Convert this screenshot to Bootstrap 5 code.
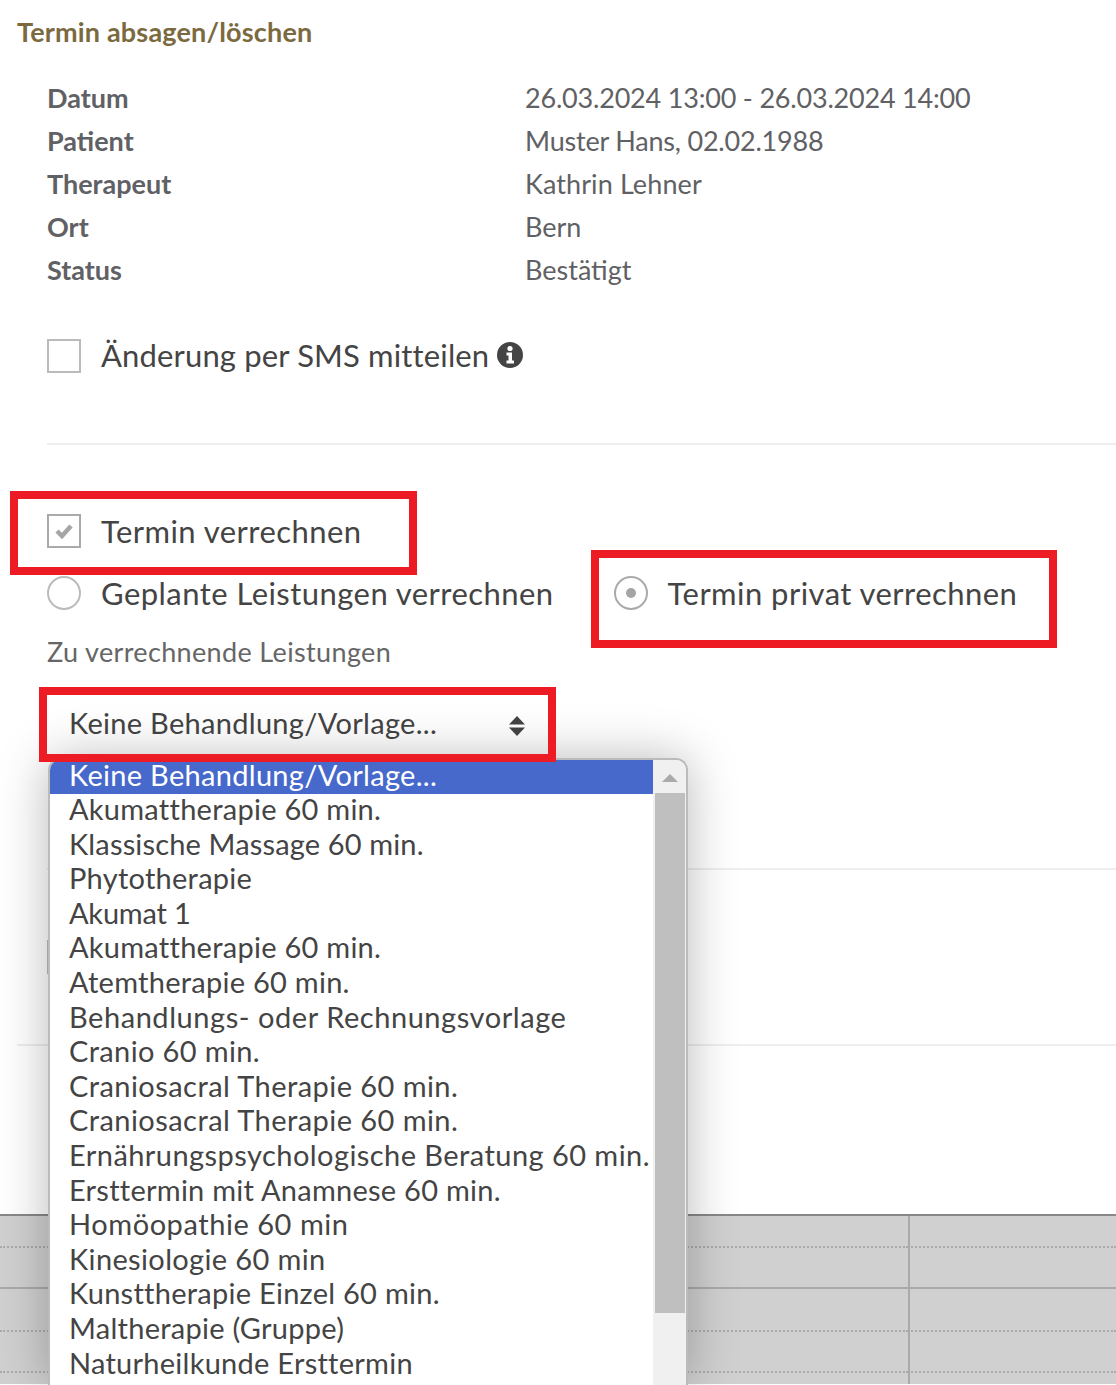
<!DOCTYPE html>
<html lang="de">
<head>
<meta charset="utf-8">
<title>Termin absagen/löschen</title>
<link href="https://cdn.jsdelivr.net/npm/bootstrap@5.3.0/dist/css/bootstrap.min.css" rel="stylesheet">
<style>
html,body{height:1385px;overflow:hidden;background:#fff}
body{font-family:Lato,"Open Sans",sans-serif;color:#444;position:relative}
.dlg-title{font-size:27px;font-weight:700;letter-spacing:.18px;color:#7c6a3f;line-height:32px;margin:16px 0 0 17px}
.facts{margin:28px 0 0 47px;width:1069px}
.fact-row{height:43px;font-size:27px;line-height:43px;color:#5f6164;display:flex}
.fact-key{width:478px;font-weight:700}
.nums{letter-spacing:-.2px}
.wordy{letter-spacing:.1px}
.sms-row{margin:48px 0 0 47px;height:34px}
.opt-row{display:flex;align-items:center;font-size:31px;line-height:34px;color:#444;letter-spacing:.45px}
.sms-row{letter-spacing:.15px}
.sms-row span,.sms-row svg{margin-top:-2px}
.opt-row .form-check-input{width:34px;height:34px;margin:0 20px 0 0;border:2px solid #bbb;border-radius:0;background-color:#fff;box-shadow:none;flex:none;float:none;opacity:1}
.opt-row .form-check-input[type=radio]{border-radius:50%}
.opt-row .form-check-input:checked{background-color:#fff;border-color:#aaa}
.opt-row .form-check-input:checked[type=checkbox]{--bs-form-check-bg-image:url("data:image/svg+xml,%3csvg xmlns='http://www.w3.org/2000/svg' viewBox='0 0 30 30'%3e%3cpath fill='none' stroke='%23a5a5a5' stroke-width='4.5' d='M8 15l5 5 9-10'/%3e%3c/svg%3e");background-size:100%}
.opt-row .form-check-input:checked[type=radio]{--bs-form-check-bg-image:url("data:image/svg+xml,%3csvg xmlns='http://www.w3.org/2000/svg' viewBox='0 0 30 30'%3e%3ccircle cx='15' cy='15' r='5' fill='%23a5a5a5'/%3e%3c/svg%3e");background-size:100%}
.opt-row .radio-second{margin-left:60px}
.info-ico{width:26px;height:26px;margin-left:8px;flex:none}
.rule-a{border-top:2px solid #eee;margin:70px 0 0 47px;height:0}
.charge-row{margin:69px 0 0 47px;height:34px}
.radio-line{margin:28px 0 0 47px;height:34px}
.field-cap{margin:26px 0 0 47px;font-size:27px;line-height:32px;color:#666;letter-spacing:.35px}
.sel-fake{margin:23px 0 0 47px;width:501px;height:66px;border:0;border-radius:0;font-size:29px;line-height:34px;letter-spacing:.3px;color:#444;padding:0 0 2px 22px;background-color:#fff;background-image:url("data:image/svg+xml,%3csvg xmlns='http://www.w3.org/2000/svg' viewBox='0 0 16 20'%3e%3cpath fill='%23444' d='M8 0l8 8.500H0zM8 20l8-8.500H0z'/%3e%3c/svg%3e");background-size:16px 20px;background-position:462px 25px;box-shadow:0 4px 6px -3px rgba(0,0,0,.12)}
.rule-b{border-top:2px solid #eee;margin:111px 0 0 47px;height:0}
.stub-check{margin:70px 0 0 47px;width:34px;height:34px;border:2px solid #bbb}
.rule-c{border-top:2px solid #eee;margin:70px 0 0 17px;height:0}
.cal{margin-top:168px;background:#d0d0d0;border-top:2px solid #888}
.cal-row{display:flex}
.cal-cell{border-bottom:2px dotted #aaa}
.cal-cell:first-child{width:908px}
.cal-cell:last-child{flex:1;border-left:2px solid #aaa}
.cal-solid .cal-cell{border-bottom-style:solid}
.cal-end .cal-cell{border-bottom:0}
.h30{height:32px}.h40{height:41px}.h42{height:43px}.h10{height:11px}
.red-box{position:absolute;border:8px solid #ed1c24;z-index:5;pointer-events:none}
.rb1{left:10px;top:491px;width:407px;height:84px}
.rb2{left:591px;top:550px;width:466px;height:98px}
.rb3{left:39px;top:687px;width:517px;height:75px}
.pick-menu{position:absolute;left:48px;top:758px;width:640px;height:627px;background:#fff;border:2px solid #bbb;border-bottom:0;border-radius:12px 12px 0 0;box-shadow:0 0 50px rgba(0,0,0,.28);display:flex;overflow:hidden;z-index:4}
.pick-list{flex:1;font-size:29px;color:#444;white-space:nowrap;min-width:0}
.pick-item{padding-left:19px;height:34.6px;line-height:29px}
.pick-on{background:#4669cb;color:#fff;height:34px;line-height:30px;letter-spacing:.3px}
.s0{letter-spacing:-.2px}.s15{letter-spacing:.15px}.s25{letter-spacing:.26px}.s35{letter-spacing:.36px}.s45{letter-spacing:.44px}.s55{letter-spacing:.55px}
.pick-bar{width:33px;background:#f0f0f0;flex:none;padding:0 1px 0 2px}
.pick-arrow{width:0;height:0;margin:14px auto 0;border:8px solid transparent;border-top:0;border-bottom:8px solid #aaa}
.pick-thumb{height:520px;background:#bfbfbf;margin-top:11px}
</style>
</head>
<body>
<div class="dlg-title">Termin absagen/löschen</div>
<div class="facts">
  <div class="fact-row"><div class="fact-key">Datum</div><div class="nums">26.03.2024 13:00 - 26.03.2024 14:00</div></div>
  <div class="fact-row"><div class="fact-key">Patient</div><div class="nums">Muster Hans, 02.02.1988</div></div>
  <div class="fact-row"><div class="fact-key">Therapeut</div><div class="wordy">Kathrin Lehner</div></div>
  <div class="fact-row"><div class="fact-key">Ort</div><div>Bern</div></div>
  <div class="fact-row"><div class="fact-key">Status</div><div>Bestätigt</div></div>
</div>
<div class="opt-row sms-row">
  <input class="form-check-input" type="checkbox"><span>Änderung per SMS mitteilen</span>
  <svg class="info-ico" viewBox="0 0 26 26"><circle cx="13" cy="13" r="13" fill="#444"/><circle cx="13" cy="6.500" r="2.600" fill="#fff"/><path fill="#fff" d="M9.500 10.500h5.500v8h2v3H9.500v-3h2v-5h-2z"/></svg>
</div>
<div class="rule-a"></div>
<div class="opt-row charge-row">
  <input class="form-check-input" type="checkbox" checked><span>Termin verrechnen</span>
</div>
<div class="opt-row radio-line">
  <input class="form-check-input" type="radio" name="art"><span>Geplante Leistungen verrechnen</span>
  <input class="form-check-input radio-second" type="radio" name="art" checked><span>Termin privat verrechnen</span>
</div>
<div class="field-cap">Zu verrechnende Leistungen</div>
<select class="form-select sel-fake"><option>Keine Behandlung/Vorlage...</option></select>
<div class="rule-b"></div>
<div class="stub-check"></div>
<div class="rule-c"></div>
<div class="cal">
  <div class="cal-row"><div class="cal-cell h30"></div><div class="cal-cell h30"></div></div>
  <div class="cal-row cal-solid"><div class="cal-cell h40"></div><div class="cal-cell h40"></div></div>
  <div class="cal-row"><div class="cal-cell h42"></div><div class="cal-cell h42"></div></div>
  <div class="cal-row"><div class="cal-cell h40"></div><div class="cal-cell h40"></div></div>
  <div class="cal-row cal-end"><div class="cal-cell h10"></div><div class="cal-cell h10"></div></div>
</div>

<div class="pick-menu">
  <div class="pick-list">
    <div class="pick-item pick-on">Keine Behandlung/Vorlage...</div>
    <div class="pick-item s25">Akumattherapie 60 min.</div>
    <div class="pick-item s15">Klassische Massage 60 min.</div>
    <div class="pick-item s25">Phytotherapie</div>
    <div class="pick-item s0">Akumat 1</div>
    <div class="pick-item s25">Akumattherapie 60 min.</div>
    <div class="pick-item s25">Atemtherapie 60 min.</div>
    <div class="pick-item s55">Behandlungs- oder Rechnungsvorlage</div>
    <div class="pick-item s35">Cranio 60 min.</div>
    <div class="pick-item s45">Craniosacral Therapie 60 min.</div>
    <div class="pick-item s45">Craniosacral Therapie 60 min.</div>
    <div class="pick-item s45">Ernährungspsychologische Beratung 60 min.</div>
    <div class="pick-item s25">Ersttermin mit Anamnese 60 min.</div>
    <div class="pick-item s55">Homöopathie 60 min</div>
    <div class="pick-item s35">Kinesiologie 60 min</div>
    <div class="pick-item s25">Kunsttherapie Einzel 60 min.</div>
    <div class="pick-item s25">Maltherapie (Gruppe)</div>
    <div class="pick-item s25">Naturheilkunde Ersttermin</div>
  </div>
  <div class="pick-bar"><div class="pick-arrow"></div><div class="pick-thumb"></div></div>
</div>
<div class="red-box rb1"></div>
<div class="red-box rb2"></div>
<div class="red-box rb3"></div>
<script src="https://cdn.jsdelivr.net/npm/bootstrap@5.3.0/dist/js/bootstrap.bundle.min.js"></script>
</body>
</html>
